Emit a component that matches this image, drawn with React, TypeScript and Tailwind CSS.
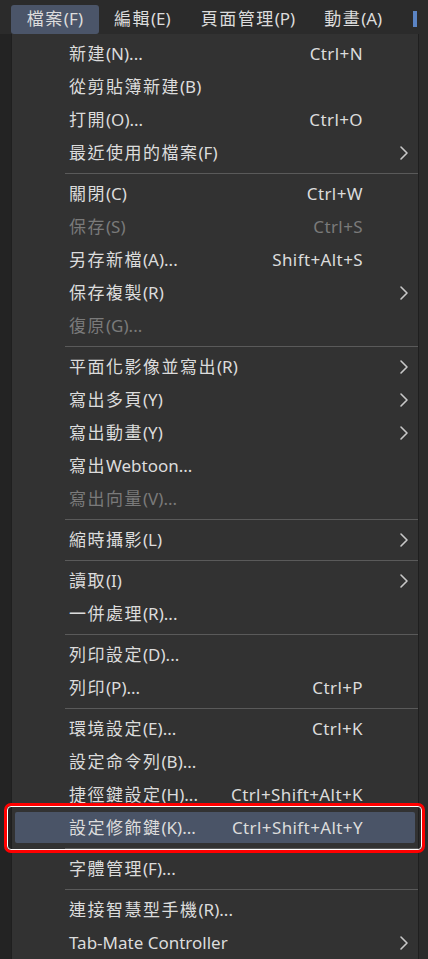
import React from "react";

type Item =
  | { sep: true }
  | { sep?: false; label: string; shortcut?: string; sub?: boolean; disabled?: boolean; active?: boolean };

const items: Item[] = [
  { label: "新建(N)...", shortcut: "Ctrl+N" },
  { label: "從剪貼簿新建(B)" },
  { label: "打開(O)...", shortcut: "Ctrl+O" },
  { label: "最近使用的檔案(F)", sub: true },
  { sep: true },
  { label: "關閉(C)", shortcut: "Ctrl+W" },
  { label: "保存(S)", shortcut: "Ctrl+S", disabled: true },
  { label: "另存新檔(A)...", shortcut: "Shift+Alt+S" },
  { label: "保存複製(R)", sub: true },
  { label: "復原(G)...", disabled: true },
  { sep: true },
  { label: "平面化影像並寫出(R)", sub: true },
  { label: "寫出多頁(Y)", sub: true },
  { label: "寫出動畫(Y)", sub: true },
  { label: "寫出Webtoon..." },
  { label: "寫出向量(V)...", disabled: true },
  { sep: true },
  { label: "縮時攝影(L)", sub: true },
  { sep: true },
  { label: "讀取(I)", sub: true },
  { label: "一併處理(R)..." },
  { sep: true },
  { label: "列印設定(D)..." },
  { label: "列印(P)...", shortcut: "Ctrl+P" },
  { sep: true },
  { label: "環境設定(E)...", shortcut: "Ctrl+K" },
  { label: "設定命令列(B)..." },
  { label: "捷徑鍵設定(H)...", shortcut: "Ctrl+Shift+Alt+K" },
  { label: "設定修飾鍵(K)...", shortcut: "Ctrl+Shift+Alt+Y", active: true },
  { sep: true },
  { label: "字體管理(F)..." },
  { sep: true },
  { label: "連接智慧型手機(R)..." },
  { label: "Tab-Mate Controller", sub: true },
];

function Label({ text }: { text: string }) {
  const parts = text.split(/([\u4e00-\u9fff]+)/).filter((p) => p.length > 0);
  return (
    <>
      {parts.map((p, i) =>
        /[\u4e00-\u9fff]/.test(p) ? (
          <span key={i} className="tracking-[1.5px]">
            {p}
          </span>
        ) : (
          <span key={i}>{p}</span>
        )
      )}
    </>
  );
}

function Chevron({ color }: { color: string }) {
  return (
    <svg width="10" height="16" viewBox="0 0 10 16" fill="none">
      <path d="M2 2 L8 8 L2 14" stroke={color} strokeWidth="1.6" strokeLinecap="round" strokeLinejoin="round" />
    </svg>
  );
}

export default function App() {
  const font = { fontFamily: '"Noto Sans", "Noto Sans CJK TC", sans-serif' };
  return (
    <div className="relative w-[428px] h-[959px] overflow-hidden bg-[#2b2b2b] text-[17px] text-[#dcdcdc]" style={font}>
      {/* top menu bar */}
      <div className="flex h-[34px] items-center bg-[#2b2b2b] pl-[11px]">
        <div className="mt-[4px] flex h-[29px] w-[88px] items-center justify-center rounded-[3px] bg-[#4b5569] whitespace-nowrap">
          <Label text="檔案(F)" />
        </div>
        <div className="ml-[15px] mt-[4px] whitespace-nowrap">
          <Label text="編輯(E)" />
        </div>
        <div className="ml-[30px] mt-[4px] whitespace-nowrap">
          <Label text="頁面管理(P)" />
        </div>
        <div className="ml-[29px] mt-[4px] whitespace-nowrap">
          <Label text="動畫(A)" />
        </div>
        <div className="ml-[31px] mt-[4px] h-[16px] w-[4px] shrink-0 bg-[#5b84c4]" />
      </div>
      <div className="flex">
        <div className="w-[11px] bg-[#232323]" />
        <div className="w-[408px] border-l border-r border-[#1f1f1f] bg-[#323232] pt-[3px]">
          {items.map((it, i) =>
            it.sep ? (
              <div key={i} className="flex h-[8px] items-center pl-[53px]">
                <div className="h-px w-full bg-[#5a5a5a]" />
              </div>
            ) : (
              <div key={i} className={"flex h-[33px] items-center " + (it.active ? "px-[3px] py-[1px]" : "")}>
                <div
                  className={
                    "flex h-full w-full items-center " +
                    (it.active ? "rounded-[2px] bg-[#4a5467] pl-[54px]" : "pl-[57px]") +
                    (it.disabled ? " text-[#7a7a7a]" : " text-[#dcdcdc]")
                  }
                >
                  <span className="flex-1 whitespace-nowrap">
                    <Label text={it.label} />
                  </span>
                  <span className="whitespace-nowrap tracking-[0.4px]">{it.shortcut ?? ""}</span>
                  <span className={"flex justify-end " + (it.active ? "w-[52px] pr-[8px]" : "w-[55px] pr-[9px]")}>
                    {it.sub ? <Chevron color="#c8c8c8" /> : null}
                  </span>
                </div>
              </div>
            )
          )}
        </div>
        <div className="flex-1 bg-[#2b2b2b]" />
      </div>
      {/* annotation highlight */}
      <div className="absolute left-[4px] top-[803px] h-[50px] w-[421px] rounded-[7px] border-[3px] border-[#ff0000]">
        <div className="h-full w-full rounded-[4px] border border-white" />
      </div>
    </div>
  );
}
